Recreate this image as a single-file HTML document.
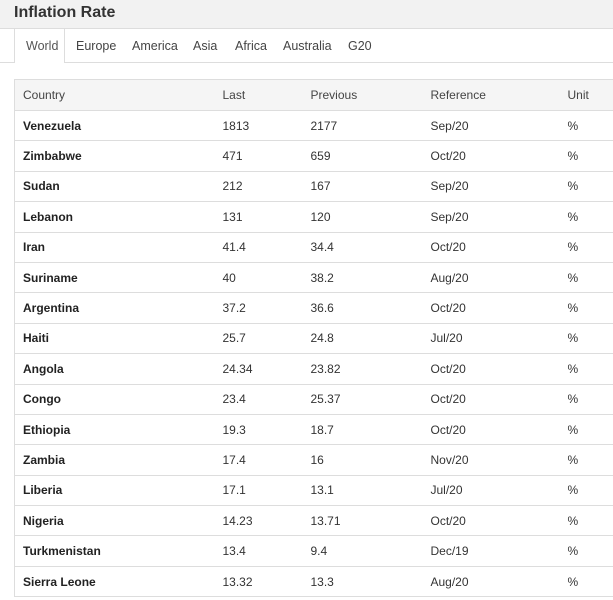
<!DOCTYPE html><html><head><style>
body{margin:0;width:613px;height:600px;overflow:hidden;background:#fff;font-family:"Liberation Sans",Arial,sans-serif;color:#333}
.hd{position:absolute;left:0;top:0;width:613px;height:28px;background:#f2f2f2;border-bottom:1px solid #ddd}
.hd span{position:absolute;left:14px;top:4px;font-size:16px;font-weight:bold;color:#333}
.tabs{position:absolute;left:0;top:29px;width:613px;height:33px;border-bottom:1px solid #ddd;background:#fff}
.tab{position:absolute;top:10px;font-size:12.5px;color:#444}
.act{position:absolute;left:14px;top:0;width:49px;height:34px;background:#fff;border:1px solid #ddd;border-bottom:none;border-top:none}
table{position:absolute;left:14px;top:79px;width:620px;border-collapse:collapse;font-size:12px}
td,th{height:29.4px;padding:0;border-top:1px solid #ddd;text-align:left;font-weight:normal}
th{background:#f5f5f5;height:30px;color:#444}
tr td:first-child,tr th:first-child{padding-left:8px;border-left:1px solid #ddd}
td:first-child{font-weight:bold;color:#222}
tr:last-child td{border-bottom:1px solid #ddd}
</style></head><body>
<div class="hd"><span>Inflation Rate</span></div>
<div class="tabs"><div class="act"></div>
<span class="tab" style="left:26px;color:#555">World</span><span class="tab" style="left:76px">Europe</span><span class="tab" style="left:132px">America</span><span class="tab" style="left:193px">Asia</span><span class="tab" style="left:235px">Africa</span><span class="tab" style="left:283px">Australia</span><span class="tab" style="left:348px">G20</span></div>
<table>
<colgroup><col style="width:208px"><col style="width:88px"><col style="width:120px"><col style="width:137px"><col></colgroup>
<tr><th>Country</th><th>Last</th><th>Previous</th><th>Reference</th><th>Unit</th></tr>
<tr><td>Venezuela</td><td>1813</td><td>2177</td><td>Sep/20</td><td>%</td></tr>
<tr><td>Zimbabwe</td><td>471</td><td>659</td><td>Oct/20</td><td>%</td></tr>
<tr><td>Sudan</td><td>212</td><td>167</td><td>Sep/20</td><td>%</td></tr>
<tr><td>Lebanon</td><td>131</td><td>120</td><td>Sep/20</td><td>%</td></tr>
<tr><td>Iran</td><td>41.4</td><td>34.4</td><td>Oct/20</td><td>%</td></tr>
<tr><td>Suriname</td><td>40</td><td>38.2</td><td>Aug/20</td><td>%</td></tr>
<tr><td>Argentina</td><td>37.2</td><td>36.6</td><td>Oct/20</td><td>%</td></tr>
<tr><td>Haiti</td><td>25.7</td><td>24.8</td><td>Jul/20</td><td>%</td></tr>
<tr><td>Angola</td><td>24.34</td><td>23.82</td><td>Oct/20</td><td>%</td></tr>
<tr><td>Congo</td><td>23.4</td><td>25.37</td><td>Oct/20</td><td>%</td></tr>
<tr><td>Ethiopia</td><td>19.3</td><td>18.7</td><td>Oct/20</td><td>%</td></tr>
<tr><td>Zambia</td><td>17.4</td><td>16</td><td>Nov/20</td><td>%</td></tr>
<tr><td>Liberia</td><td>17.1</td><td>13.1</td><td>Jul/20</td><td>%</td></tr>
<tr><td>Nigeria</td><td>14.23</td><td>13.71</td><td>Oct/20</td><td>%</td></tr>
<tr><td>Turkmenistan</td><td>13.4</td><td>9.4</td><td>Dec/19</td><td>%</td></tr>
<tr><td>Sierra Leone</td><td>13.32</td><td>13.3</td><td>Aug/20</td><td>%</td></tr>
</table>
</body></html>
